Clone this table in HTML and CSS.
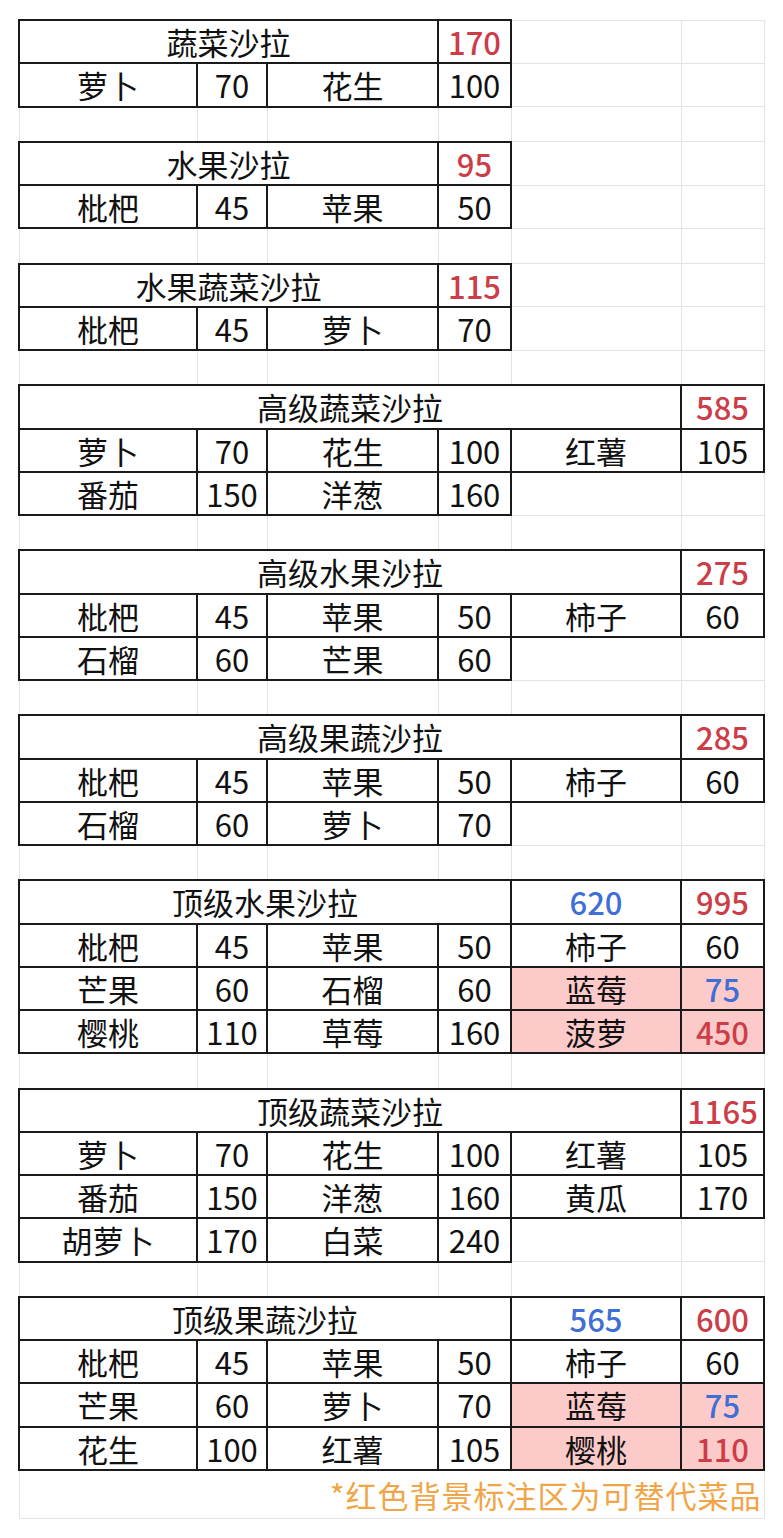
FILE: index.html
```html
<!DOCTYPE html>
<html lang="zh-CN">
<head>
<meta charset="utf-8">
<title>沙拉配方</title>
<link rel="stylesheet" href="styles.css">
</head>
<body>
<table class="sheet">
  <colgroup>
    <col class="c1"><col class="c2"><col class="c3"><col class="c4"><col class="c5"><col class="c6">
  </colgroup>
  <tbody>
    <tr class="r"><td class="b" colspan="3">蔬菜沙拉</td><td class="b red">170</td><td></td><td></td></tr>
    <tr class="r"><td class="b">萝卜</td><td class="b">70</td><td class="b">花生</td><td class="b">100</td><td></td><td></td></tr>
    <tr class="s"><td></td><td></td><td></td><td></td><td></td><td></td></tr>

    <tr class="r"><td class="b" colspan="3">水果沙拉</td><td class="b red">95</td><td></td><td></td></tr>
    <tr class="r"><td class="b">枇杷</td><td class="b">45</td><td class="b">苹果</td><td class="b">50</td><td></td><td></td></tr>
    <tr class="s"><td></td><td></td><td></td><td></td><td></td><td></td></tr>

    <tr class="r"><td class="b" colspan="3">水果蔬菜沙拉</td><td class="b red">115</td><td></td><td></td></tr>
    <tr class="r"><td class="b">枇杷</td><td class="b">45</td><td class="b">萝卜</td><td class="b">70</td><td></td><td></td></tr>
    <tr class="s"><td></td><td></td><td></td><td></td><td></td><td></td></tr>

    <tr class="r"><td class="b" colspan="5">高级蔬菜沙拉</td><td class="b red">585</td></tr>
    <tr class="r"><td class="b">萝卜</td><td class="b">70</td><td class="b">花生</td><td class="b">100</td><td class="b">红薯</td><td class="b">105</td></tr>
    <tr class="r"><td class="b">番茄</td><td class="b">150</td><td class="b">洋葱</td><td class="b">160</td><td></td><td></td></tr>
    <tr class="s"><td></td><td></td><td></td><td></td><td></td><td></td></tr>

    <tr class="r"><td class="b" colspan="5">高级水果沙拉</td><td class="b red">275</td></tr>
    <tr class="r"><td class="b">枇杷</td><td class="b">45</td><td class="b">苹果</td><td class="b">50</td><td class="b">柿子</td><td class="b">60</td></tr>
    <tr class="r"><td class="b">石榴</td><td class="b">60</td><td class="b">芒果</td><td class="b">60</td><td></td><td></td></tr>
    <tr class="s"><td></td><td></td><td></td><td></td><td></td><td></td></tr>

    <tr class="r"><td class="b" colspan="5">高级果蔬沙拉</td><td class="b red">285</td></tr>
    <tr class="r"><td class="b">枇杷</td><td class="b">45</td><td class="b">苹果</td><td class="b">50</td><td class="b">柿子</td><td class="b">60</td></tr>
    <tr class="r"><td class="b">石榴</td><td class="b">60</td><td class="b">萝卜</td><td class="b">70</td><td></td><td></td></tr>
    <tr class="s"><td></td><td></td><td></td><td></td><td></td><td></td></tr>

    <tr class="r"><td class="b" colspan="4">顶级水果沙拉</td><td class="b blue">620</td><td class="b red">995</td></tr>
    <tr class="r"><td class="b">枇杷</td><td class="b">45</td><td class="b">苹果</td><td class="b">50</td><td class="b">柿子</td><td class="b">60</td></tr>
    <tr class="r"><td class="b">芒果</td><td class="b">60</td><td class="b">石榴</td><td class="b">60</td><td class="b alt">蓝莓</td><td class="b alt blue">75</td></tr>
    <tr class="r"><td class="b">樱桃</td><td class="b">110</td><td class="b">草莓</td><td class="b">160</td><td class="b alt">菠萝</td><td class="b alt red">450</td></tr>
    <tr class="s"><td></td><td></td><td></td><td></td><td></td><td></td></tr>

    <tr class="r"><td class="b" colspan="5">顶级蔬菜沙拉</td><td class="b red">1165</td></tr>
    <tr class="r"><td class="b">萝卜</td><td class="b">70</td><td class="b">花生</td><td class="b">100</td><td class="b">红薯</td><td class="b">105</td></tr>
    <tr class="r"><td class="b">番茄</td><td class="b">150</td><td class="b">洋葱</td><td class="b">160</td><td class="b">黄瓜</td><td class="b">170</td></tr>
    <tr class="r"><td class="b">胡萝卜</td><td class="b">170</td><td class="b">白菜</td><td class="b">240</td><td></td><td></td></tr>
    <tr class="s"><td></td><td></td><td></td><td></td><td></td><td></td></tr>

    <tr class="r"><td class="b" colspan="4">顶级果蔬沙拉</td><td class="b blue">565</td><td class="b red">600</td></tr>
    <tr class="r"><td class="b">枇杷</td><td class="b">45</td><td class="b">苹果</td><td class="b">50</td><td class="b">柿子</td><td class="b">60</td></tr>
    <tr class="r"><td class="b">芒果</td><td class="b">60</td><td class="b">萝卜</td><td class="b">70</td><td class="b alt">蓝莓</td><td class="b alt blue">75</td></tr>
    <tr class="r"><td class="b">花生</td><td class="b">100</td><td class="b">红薯</td><td class="b">105</td><td class="b alt">樱桃</td><td class="b alt red">110</td></tr>
    <tr class="n"><td class="note" colspan="6">*红色背景标注区为可替代菜品</td></tr>
  </tbody>
</table>
</body>
</html>
```

FILE: styles.css
```css
html, body {
  margin: 0;
  padding: 0;
  background: #ffffff;
}

body {
  font-family: "Noto Sans CJK SC", "Noto Sans", sans-serif;
  color: #111111;
}

.sheet {
  margin: 19px 0 0 18px;
  width: 745px;
  table-layout: fixed;
  border-collapse: collapse;
}

.c1 { width: 178px; }
.c2 { width: 70px; }
.c3 { width: 171px; }
.c4 { width: 73px; }
.c5 { width: 170px; }
.c6 { width: 83px; }

.sheet td {
  border: 1px solid #e3e3e3;
  padding: 0;
  text-align: center;
  vertical-align: middle;
  font-size: 31px;
  line-height: 1;
  white-space: nowrap;
}

.sheet td.b {
  border: 2px solid #1a1a1a;
}

.r { height: 43.25px; }
.s { height: 35.25px; }
.n { height: 49px; }

.red { color: #cc3d48; font-weight: 500; }
.blue { color: #3f6fd6; font-weight: 500; }

.sheet td.alt { background: #fdcaca; }

.sheet td.note {
  text-align: right;
  color: #f0a548;
  letter-spacing: 1px;
  padding-right: 2px;
  font-size: 31px;
}
```
